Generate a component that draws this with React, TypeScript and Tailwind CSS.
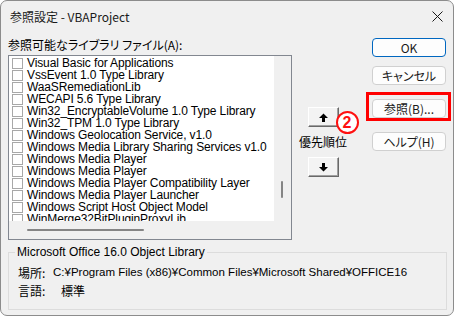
import React from 'react';

const items = [
  'Visual Basic for Applications',
  'VssEvent 1.0 Type Library',
  'WaaSRemediationLib',
  'WECAPI 5.6 Type Library',
  'Win32_EncryptableVolume 1.0 Type Library',
  'Win32_TPM 1.0 Type Library',
  'Windows Geolocation Service, v1.0',
  'Windows Media Library Sharing Services v1.0',
  'Windows Media Player',
  'Windows Media Player',
  'Windows Media Player Compatibility Layer',
  'Windows Media Player Launcher',
  'Windows Script Host Object Model',
  'WinMerge32BitPluginProxyLib',
];

const jp = "font-['Noto_Sans_CJK_JP',sans-serif] [font-feature-settings:'palt']";
const list = "font-['Liberation_Sans','Noto_Sans_CJK_JP',sans-serif]";

const Arrow = ({ down }: { down?: boolean }) => (
  <svg width="9" height="9" viewBox="0 0 9 9" className={down ? 'rotate-180' : ''}>
    <path d="M4.5 0.5 L9 5 L6 5 L6 9 L3 9 L3 5 L0 5 Z" fill="#000" />
  </svg>
);

const OrderButton = ({ down }: { down?: boolean }) => (
  <button className="w-[31px] h-[20px] flex items-center justify-center bg-[#f3f3f3] border border-t-white border-l-white border-r-[#696969] border-b-[#696969] shadow-[inset_-1px_-1px_0_#a0a0a0]">
    <Arrow down={down} />
  </button>
);

const DlgButton = ({ label, primary }: { label: string; primary?: boolean }) => (
  <button
    className={`w-[74px] h-[19px] rounded-[4px] bg-[#fdfdfd] text-[12px] leading-none text-[#1a1a1a] flex items-center justify-center ${jp} ${
      primary ? 'border border-[#0067c0]' : 'border border-[#d0d0d0]'
    }`}
  >
    {label}
  </button>
);

export default function App() {
  return (
    <div className="w-[455px] h-[317px] bg-white">
      <div className="w-[454px] h-[316px] bg-[#f0f0f0] border border-[#8c8c8c] rounded-[7px] flex flex-col overflow-hidden">
        {/* title bar */}
        <div className="h-[31px] flex items-center justify-between pl-[9px] pr-[10px]">
          <span className={`text-[12px] text-[#1a1a1a] ${jp}`}>参照設定 - VBAProject</span>
          <svg width="11" height="11" viewBox="0 0 11 11">
            <path d="M0.5 0.5 L10.5 10.5 M10.5 0.5 L0.5 10.5" stroke="#1a1a1a" strokeWidth="1" />
          </svg>
        </div>

        <div className="flex flex-col px-[7px]">
          <div className="flex">
            {/* left column */}
            <div className="flex flex-col">
              <div className={`mt-[7px] h-[12px] text-[12px] leading-[12px] text-black ${jp}`}>
                参照可能なライブラリ ファイル(A):
              </div>
              <div className="mt-[4px] w-[284px] h-[185px] border border-[#828790] grid grid-cols-[265px_17px] grid-rows-[165px_17px]">
                <div className="bg-white overflow-hidden pt-[1px] pl-[3px]">
                  {items.map((t, i) => (
                    <div key={i} className="h-[12px] flex items-center whitespace-nowrap">
                      <span className="w-[11px] h-[11px] shrink-0 border border-[#a8a8a8] bg-white" />
                      <span className={`ml-[4px] text-[12px] leading-[12px] tracking-[-0.12px] text-black ${list}`}>{t}</span>
                    </div>
                  ))}
                </div>
                <div className="relative">
                  <div className="absolute left-[7px] top-[125px] w-[2px] h-[17px] bg-[#858585] rounded-full" />
                </div>
                <div className="relative">
                  <div className="absolute left-[18px] top-[8px] w-[117px] h-[2px] bg-[#858585] rounded-full" />
                </div>
                <div />
              </div>
            </div>

            {/* priority column */}
            <div className="w-[48px] ml-[7px] flex flex-col items-center pt-[75px]">
              <div className="relative">
                <OrderButton />
                <span className="absolute left-[28px] top-[4px] w-[23px] h-[23px] rounded-full border-[2.5px] border-[#ff1010] bg-white flex items-center justify-center text-[#ff1010] text-[16px] font-bold leading-none font-['Liberation_Sans',sans-serif]">
                  2
                </span>
              </div>
              <div className={`mt-[9px] h-[12px] text-[12px] leading-[12px] text-black ${jp}`}>優先順位</div>
              <div className="mt-[9px]">
                <OrderButton down />
              </div>
            </div>

            {/* buttons column */}
            <div className="ml-[25px] flex flex-col pt-[6px]">
              <DlgButton label="OK" primary />
              <div className="mt-[9px]">
                <DlgButton label="キャンセル" />
              </div>
              <div className="mt-[14px] relative">
                <DlgButton label="参照(B)..." />
                <span className="absolute -left-[6px] -top-[7px] w-[85px] h-[29px] border-[3px] border-[#ff0000]" />
              </div>
              <div className="mt-[14px]">
                <DlgButton label="ヘルプ(H)" />
              </div>
            </div>
          </div>

          {/* group box */}
          <fieldset className="mt-[6px] w-[439px] h-[64px] border border-[#dcdcdc]">
            <legend className={`ml-[6px] px-[2px] text-[12px] leading-[12px] text-black ${list}`}>
              Microsoft Office 16.0 Object Library
            </legend>
            <div className={`mt-[6px] pl-[9px] h-[18px] flex items-center text-[11.5px] text-black ${list}`}>
              <span className={`w-[35px] text-[12px] ${jp}`}>場所:</span>
              <span>C:¥Program Files (x86)¥Common Files¥Microsoft Shared¥OFFICE16</span>
            </div>
            <div className="pl-[9px] h-[18px] flex items-center text-[12px] text-black">
              <span className={`w-[43px] ${jp}`}>言語:</span>
              <span className={jp}>標準</span>
            </div>
          </fieldset>
        </div>
      </div>
    </div>
  );
}
